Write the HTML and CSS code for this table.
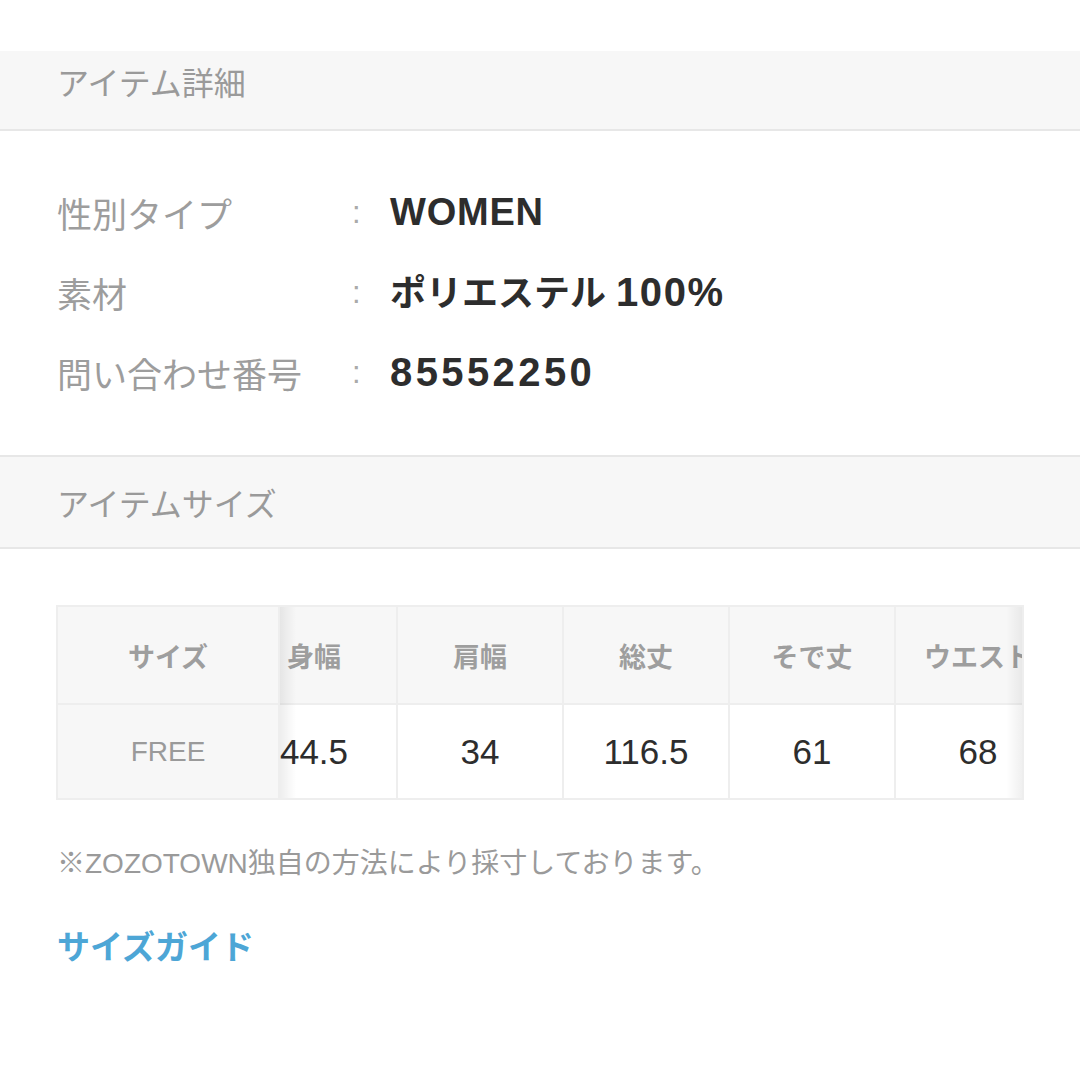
FILE: index.html
```html
<!DOCTYPE html>
<html lang="ja">
<head>
<meta charset="utf-8">
<title>アイテム詳細</title>
<link rel="stylesheet" href="styles.css">
</head>
<body>
<main class="page">
  <div class="band band-first"><h2 class="band-title">アイテム詳細</h2></div>
  <dl class="details">
    <dt class="label">性別タイプ</dt><dd class="colon">:</dd><dd class="value"><span class="latin">WOMEN</span></dd>
    <dt class="label">素材</dt><dd class="colon">:</dd><dd class="value">ポリエステル <span class="num">100%</span></dd>
    <dt class="label">問い合わせ番号</dt><dd class="colon">:</dd><dd class="value"><span class="num code">85552250</span></dd>
  </dl>
  <div class="band band-second"><h2 class="band-title">アイテムサイズ</h2></div>
  <section class="size-section">
    <div class="size-table">
      <div class="sticky-col">
        <div class="cell head">サイズ</div>
        <div class="cell first-data">FREE</div>
      </div>
      <div class="scroller">
        <div class="track">
          <div class="cell head">身幅</div>
          <div class="cell head">肩幅</div>
          <div class="cell head">総丈</div>
          <div class="cell head">そで丈</div>
          <div class="cell head">ウエスト</div>
          <div class="cell data">44.5</div>
          <div class="cell data">34</div>
          <div class="cell data">116.5</div>
          <div class="cell data">61</div>
          <div class="cell data">68</div>
        </div>
      </div>
    </div>
    <p class="note">※ZOZOTOWN独自の方法により採寸しております。</p>
    <a class="guide" href="#">サイズガイド</a>
  </section>
</main>
</body>
</html>
```
FILE: styles.css
```css
html, body {
  margin: 0;
  padding: 0;
  background: #ffffff;
}
body {
  font-family: "Liberation Sans", "Noto Sans CJK JP", sans-serif;
  width: 1080px;
  height: 1080px;
  overflow: hidden;
}
.page {
  padding-top: 51px;
}
.band {
  background: #f7f7f7;
  display: flex;
  align-items: center;
  padding-left: 57px;
  box-sizing: border-box;
}
.band-first {
  height: 80px;
  border-bottom: 2px solid #e7e7e7;
  padding-bottom: 18px;
}
.band-second {
  height: 94px;
  border-top: 2px solid #e7e7e7;
  border-bottom: 2px solid #e7e7e7;
}
.band-title {
  margin: 0;
  font-family: "Noto Sans CJK JP", sans-serif;
  font-weight: 400;
  font-size: 32px;
  color: #9a9a9a;
  line-height: 1;
}
.details {
  margin: 0;
  padding: 41px 0 43px 57px;
  display: grid;
  grid-template-columns: 293px 40px auto;
  grid-auto-rows: 80px;
  align-items: center;
}
.details dd {
  margin: 0;
}
.label {
  font-family: "Noto Sans CJK JP", sans-serif;
  font-size: 35px;
  color: #9d9d9d;
  line-height: 1;
}
.colon {
  font-family: "Liberation Sans", sans-serif;
  font-size: 31px;
  color: #aaaaaa;
  line-height: 1;
  padding-left: 2px;
}
.value {
  font-family: "Liberation Sans", "Noto Sans CJK JP", sans-serif;
  font-size: 36px;
  font-weight: 700;
  color: #2d2d2d;
  line-height: 1;
}
.latin {
  font-size: 38px;
  letter-spacing: 0.8px;
}
.num {
  font-size: 40px;
  letter-spacing: 1.6px;
}
.code {
  letter-spacing: 3.4px;
}
.size-section {
  padding: 56px 0 0 56px;
}
.size-table {
  width: 968px;
  box-sizing: border-box;
  background: #eeeeee;
  padding: 2px;
  display: flex;
  gap: 2px;
}
.sticky-col {
  width: 220px;
  display: grid;
  grid-template-rows: 96px 93px;
  gap: 2px;
  position: relative;
  z-index: 1;
}
.scroller {
  flex: 1;
  overflow: hidden;
  position: relative;
}
.scroller::before,
.scroller::after {
  content: "";
  position: absolute;
  top: 0;
  bottom: 0;
  width: 16px;
  z-index: 2;
  pointer-events: none;
}
.scroller::before {
  left: 0;
  background: linear-gradient(to right, rgba(0,0,0,0.07), rgba(0,0,0,0));
}
.scroller::after {
  right: 0;
  background: linear-gradient(to left, rgba(0,0,0,0.06), rgba(0,0,0,0));
}
.track {
  display: grid;
  grid-template-columns: repeat(5, 164px);
  grid-template-rows: 96px 93px;
  gap: 2px;
  margin-left: -48px;
  width: max-content;
}
.cell {
  display: flex;
  align-items: center;
  justify-content: center;
  white-space: nowrap;
  line-height: 1;
}
.head {
  background: #f7f7f7;
  font-family: "Noto Sans CJK JP", sans-serif;
  font-weight: 700;
  font-size: 27px;
  color: #9e9e9e;
}
.first-data {
  background: #f7f7f7;
  font-family: "Liberation Sans", sans-serif;
  font-size: 28px;
  color: #9a9a9a;
}
.data {
  background: #ffffff;
  font-family: "Liberation Sans", sans-serif;
  font-size: 35px;
  color: #2d2d2d;
}
.note {
  margin: 47px 0 0 1px;
  font-family: "Liberation Sans", "Noto Sans CJK JP", sans-serif;
  font-size: 28px;
  color: #9a9a9a;
  line-height: 1.2;
}
.guide {
  display: inline-block;
  margin: 45px 0 0 1px;
  font-family: "Noto Sans CJK JP", sans-serif;
  font-weight: 700;
  font-size: 33px;
  color: #4da6d6;
  text-decoration: none;
  line-height: 1.2;
}
```
